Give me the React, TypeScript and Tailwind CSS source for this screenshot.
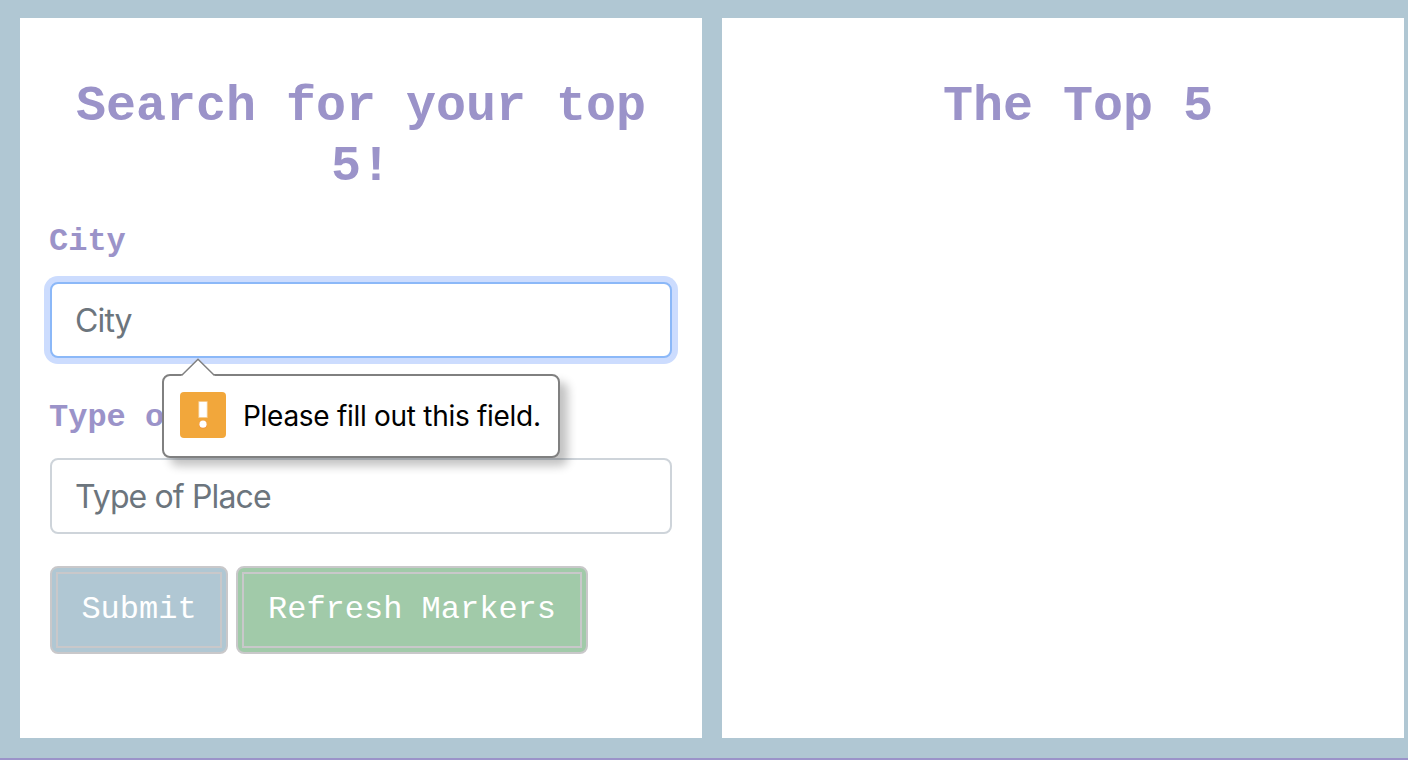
import React from 'react';

function Field({ label, focused, children }: { label: string; focused?: boolean; children?: React.ReactNode }) {
  return (
    <div className="relative mb-8">
      <label className="mb-3 -ml-px block font-['Courier_New','Liberation_Mono',monospace] text-[32px] leading-[56px] font-bold text-[#9b93c9]">
        {label}
      </label>
      <input
        type="text"
        placeholder={label}
        className={
          focused
            ? "block h-[76px] w-full rounded-[8px] border-2 border-[#8bb8f8] bg-white px-[23px] font-['Inter',sans-serif] text-[32px] tracking-[-0.87px] shadow-[0_0_0_6px_#ccdcfe] outline-none placeholder:text-[#6c757d]"
            : "block h-[76px] w-full rounded-[8px] border-2 border-[#ced4da] bg-white px-[23px] font-['Inter',sans-serif] text-[32px] tracking-[-0.87px] outline-none placeholder:text-[#6c757d]"
        }
      />
      {children}
    </div>
  );
}

function ValidationBubble() {
  return (
    <div className="absolute top-[160px] left-[112px] z-10 flex h-[84px] w-[398px] items-start rounded-[8px] border-2 border-[#808080] bg-white pt-4 pl-4 shadow-[8px_8px_10px_rgba(0,0,0,0.24)]">
      <svg className="absolute -top-[18px] left-[16px]" width="36" height="19" viewBox="0 0 36 19">
        <path d="M1 19 L1.5 17.5 L18 1.2 L34.5 17.5 L35 19 Z" fill="#fff" />
        <path d="M1.5 17.5 L18 1.2 L34.5 17.5" fill="none" stroke="#808080" strokeWidth="1.5" />
      </svg>
      <svg className="shrink-0" width="46" height="46" viewBox="0 0 46 46">
        <rect width="46" height="46" rx="4" fill="#f2a73b" />
        <rect x="18.8" y="9.6" width="8.4" height="16" fill="#fff" stroke="#f5ca8b" strokeWidth="0.8" />
        <circle cx="23" cy="32.6" r="4" fill="#f08f3c" />
        <circle cx="23" cy="32.2" r="3.6" fill="#fff" />
      </svg>
      <span className="ml-[17px] font-['Inter',sans-serif] text-[28px] leading-[48px] tracking-[-0.29px] whitespace-nowrap text-black">
        Please fill out this field.
      </span>
    </div>
  );
}

export default function App() {
  return (
    <div className="flex h-[760px] w-[1408px] flex-col overflow-hidden border-b-2 border-[#9b93c9] bg-[#b0c7d3]">
      <div className="flex gap-5 pt-[18px] pl-5">
        <section className="h-[720px] w-[682px] shrink-0 bg-white px-[30px] pt-[59px]">
          <h1 className="mb-[17px] text-center font-['Courier_New','Liberation_Mono',monospace] text-[50px] leading-[60px] font-bold text-[#9b93c9]">
            Search for your top 5!
          </h1>
          <Field label="City" focused>
            <ValidationBubble />
          </Field>
          <Field label="Type of Place" />
          <div className="flex gap-2">
            <button className="h-[88px] w-[178px] rounded-[8px] border-2 border-[#c9c8ca] bg-[#b0c7d3] p-1 font-['Courier_New','Liberation_Mono',monospace] text-[32px] text-white">
              <span className="flex h-full items-center justify-center border-2 border-[#c9c8ca]">Submit</span>
            </button>
            <button className="h-[88px] w-[352px] rounded-[8px] border-2 border-[#c9c8ca] bg-[#a1caa9] p-1 font-['Courier_New','Liberation_Mono',monospace] text-[32px] text-white">
              <span className="flex h-full items-center justify-center border-2 border-[#c9c8ca]">Refresh Markers</span>
            </button>
          </div>
        </section>
        <section className="h-[720px] w-[682px] shrink-0 bg-white px-[30px] pt-[59px]">
          <h1 className="pl-[30px] text-center font-['Courier_New','Liberation_Mono',monospace] text-[50px] leading-[60px] font-bold text-[#9b93c9]">
            The Top 5
          </h1>
        </section>
      </div>
    </div>
  );
}
